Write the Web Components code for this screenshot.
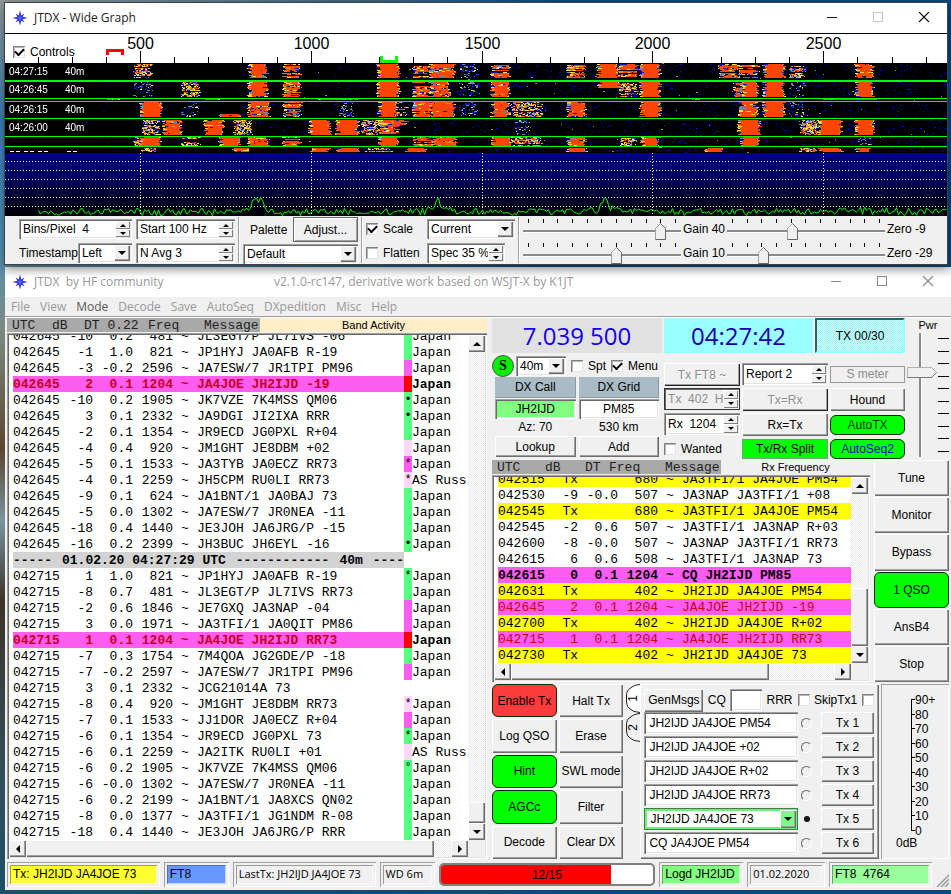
<!DOCTYPE html>
<html lang="en">
<head>
<meta charset="utf-8">
<title>JTDX</title>
<style>
html{height:100%}
body{margin:0;padding-top:2px;min-height:100%;box-sizing:border-box;overflow:hidden;color:#000;
 font:12px/14px "Liberation Sans",sans-serif;
 background:linear-gradient(90deg,transparent 8px,#0b4a80 60%),linear-gradient(180deg,#8f9a98 0,#3a7fb4 120px,#4f8fb8 240px,#7d8a80 330px,#5a4630 450px,#7a93a0 520px,#3c3428 600px,#33505e 780px,#1d4f68 100%)}
</style>
</head>
<body>
<jtdx-desktop></jtdx-desktop>
<script>
const RAISED='box-shadow:inset 1px 1px #fff,inset -1px -1px #6d6d6d,inset -2px -2px #a0a0a0;';
const SUNKEN='box-shadow:inset 1px 1px #a0a0a0,inset 2px 2px #696969,inset -1px -1px #fff,inset -2px -2px #e3e3e3;';
const BASE='*{box-sizing:border-box}button,input,select{font:inherit;color:inherit;margin:0;border:0;border-radius:0;outline:0}';
const ARROW=(d)=>{const p={up:'M4 0l4 4H0z',down:'M0 0h8L4 4z',left:'M4 0v8L0 4z',right:'M0 0l4 4-4 4z'}[d];
 const v=d==='up'||d==='down'?[8,4]:[4,8];return `<svg width="${v[0]}" height="${v[1]}" aria-hidden="true"><path d="${p}" fill="currentColor"/></svg>`};
function element(name,render,after){
 customElements.define(name,class extends HTMLElement{
  connectedCallback(){ if(this.shadowRoot)return; const r=this.attachShadow({mode:'open'});
   const t=document.createElement('template');t.innerHTML=render(this);r.append(t.content.cloneNode(true)); if(after)after(this,r);}
 });
}
const at=(e,n,d='')=>e.getAttribute(n)??d;

element('jt-button',e=>`<style>${BASE}
:host{display:block;min-width:0}
button{display:block;width:100%;height:100%;padding:0 1px;background:#f0f0f0;white-space:nowrap;overflow:hidden;${RAISED}}
:host([tone]) button{box-shadow:none;border:1px solid #0a2a0a;border-radius:6px;background:#0f0}
:host([tone=red]) button{background:#ff3b3b}
:host([tone=flat]) button{border:1px solid #7b9d7b;border-radius:0}
:host([tone=tx]) button{border:2px solid #2f7f84;border-color:#20686c #9ff #9ff #20686c;border-radius:0;background:repeating-conic-gradient(#8ff 0 25%,#e6f4f4 0 50%) 0 0/2px 2px}
:host([ink=blue]) button{color:#0000d0}
:host([ink=green]) button{color:#003a00}
:host([framed]) button{box-shadow:inset 0 0 0 1px #696969,inset 2px 2px #fff,inset -2px -2px #a0a0a0}
button:disabled{color:#8c8c8c;text-shadow:1px 1px #fff;border:0;background:#f0f0f0;box-shadow:inset 1px 1px #fff,inset -1px -1px #222,inset -2px -2px #a0a0a0}
</style><button type="button"${e.hasAttribute('disabled')?' disabled':''}><slot></slot></button>`);

element('jt-spin',e=>`<style>${BASE}
:host{display:flex;height:20px;min-width:0;padding:2px;background:#fff;${SUNKEN}}
:host([disabled]){background:#f0f0f0;color:#8c8c8c;box-shadow:inset 0 0 0 1px #333,inset 2px 2px #696969}
input{flex:1;min-width:0;width:0;padding:0 0 0 2px;background:none;height:100%}
span{display:grid;grid-template-rows:1fr 1fr;width:15px;color:#000}
button{padding:0;background:#f0f0f0;display:grid;place-items:center;min-height:0;box-shadow:inset 1px 1px #fff,inset -1px -1px #808080}
svg{width:6px;height:3px}
</style><input type="text" aria-label="${at(e,'label')}" value="${at(e,'value')}"${e.hasAttribute('disabled')?' disabled':''}>
<span><button type="button" aria-label="Increase"><svg viewBox="0 0 8 4"><path d="M4 0l4 4H0z"/></svg></button><button type="button" aria-label="Decrease"><svg viewBox="0 0 8 4"><path d="M0 0h8L4 4z"/></svg></button></span>`);

element('jt-select',e=>`<style>${BASE}
:host{display:grid;height:20px;min-width:0;padding:2px;background:#fff;${SUNKEN}}
:host([live]){background:#fff;box-shadow:inset 0 0 0 1px #3f7f46,inset 0 0 0 3px #6df07c}
select,i{grid-area:1/1;min-width:0}
select{appearance:none;background:none;width:100%;height:100%;padding:0 16px 0 2px}
i{justify-self:end;width:16px;display:grid;place-items:center;background:#f0f0f0;pointer-events:none;${RAISED}}
:host([live]) i{background:#7dfa88}
:host([live]) select{padding-left:4px}
</style><select aria-label="${at(e,'label')}"><option>${at(e,'value')}</option></select><i>${ARROW('down')}</i>`);

element('jt-check',e=>`<style>${BASE}
:host{display:block;white-space:nowrap}
label{display:flex;align-items:center;gap:5px}
:host([after]) label{flex-direction:row-reverse}
input{appearance:none;width:12px;height:12px;background:#fff;flex:none;display:grid;place-items:center;box-shadow:inset 1px 1px #808080,inset -1px -1px #e3e3e3,inset 2px 2px #b5b5b5}
input:checked::after{content:"";width:7px;height:4px;margin-top:-2px;border:solid #000;border-width:0 0 2px 2px;transform:rotate(-45deg)}
</style><label><input type="checkbox"${e.hasAttribute('checked')?' checked':''}><slot></slot></label>`);

element('jt-field',e=>`<style>${BASE}
:host{display:block;height:22px;min-width:0}
input{width:100%;height:100%;padding:0 5px;background:var(--field,#fff);${SUNKEN}}
:host([center]) input{text-align:center;padding:0 2px}
</style><input type="text" aria-label="${at(e,'label')}" value="${at(e,'value')}">`);

element('jt-slider',e=>{const th=encodeURIComponent('<svg xmlns="http://www.w3.org/2000/svg" width="11" height="17"><path d="M.5 16.500V5.500L5.500.5l5 5v11z" fill="#f0f0f0" stroke="#a0a0a0"/><path d="M5.500.5l5 5v11H.5" fill="none" stroke="#666"/></svg>');
 return `<style>${BASE}
:host{display:grid;grid-template-rows:4px 17px;min-width:0}
div{display:flex;justify-content:space-between;padding:0 5px}
b{width:1px;background:#000}
input{appearance:none;width:100%;height:17px;background:linear-gradient(#8a8a8a 2px,#fff 2px) center/100% 3px no-repeat}
input::-webkit-slider-thumb{appearance:none;width:11px;height:17px;background:url("data:image/svg+xml,${th}")}
</style><div>${'<b></b>'.repeat(11)}</div><input type="range" min="0" max="100" value="${at(e,'value')}" aria-label="${at(e,'label')}">`});

element('power-slider',()=>{const th=encodeURIComponent('<svg xmlns="http://www.w3.org/2000/svg" width="30" height="11"><path d="M.5.5h24l5 5-5 5H.5z" fill="#f0f0f0" stroke="#b0b0b0"/><path d="M29.500 5.500l-5 5H.5" fill="none" stroke="#777"/></svg>');
 return `<style>${BASE}
:host{display:grid;grid-template:15px 1fr/30px 1fr;min-width:0}
label{grid-column:1/3;justify-self:center;font-size:11px}
input{appearance:none;writing-mode:vertical-lr;direction:rtl;width:30px;height:124px;background:linear-gradient(90deg,#8a8a8a 2px,#fff 2px) 12px 0/3px 100% no-repeat}
input::-webkit-slider-thumb{appearance:none;width:30px;height:11px;background:url("data:image/svg+xml,${th}")}
div{display:flex;flex-direction:column;justify-content:space-between;height:124px;padding:5px 0}
b{height:1px;background:#000;margin-left:1px}
</style><label for="p">Pwr</label><input id="p" type="range" min="0" max="100" value="70"><div>${'<b></b>'.repeat(10)}</div>`});

const STAR=`<svg class="star" width="16" height="16" viewBox="-8 -8 16 16" aria-hidden="true"><path d="M0-7.500L1.300-2.500 4.500-4.500 2.500-1.300 7.500 0 2.500 1.300 4.500 4.500 1.300 2.500 0 7.500-1.300 2.500-4.500 4.500-2.500 1.300-7.500 0-2.500-1.300-4.500-4.500-1.300-2.500z" fill="#2323f5"/><path d="M0-5L.8-.8 5 0 .8.8 0 5-.8.8-5 0-.8-.8z" fill="#5b6bff"/></svg>`;
element('app-window',e=>`<style>${BASE}
:host{display:block;background:#f0f0f0}
header{display:grid;grid-template-columns:262px auto 1fr;align-items:center;height:30px;background:#fff;padding-left:7px;font:12px/16px "Open Sans","Noto Sans",sans-serif;color:#222}
:host([inactive]) header{color:#999;background:linear-gradient(#ececec,#fff 10px)}
.name{display:flex;align-items:center;gap:6px;white-space:pre}
nav{display:flex;justify-content:flex-end}
nav button{width:46px;height:28px;padding:0;background:none;display:grid;place-items:center;color:#111}
:host([inactive]) button{color:#8a8a8a}
nav button:disabled{color:#c4c4c4}
</style><header><span class="name">${STAR}${at(e,'name')}</span><span>${at(e,'note')}</span><nav>
<button aria-label="Minimize"><svg width="12" height="12"><path d="M1 5.500h10" stroke="currentColor"/></svg></button>
<button aria-label="Maximize"${e.hasAttribute('fixed')?' disabled':''}><svg width="12" height="12"><rect x="1.500" y=".5" width="9" height="9" fill="none" stroke="currentColor"/></svg></button>
<button aria-label="Close"><svg width="12" height="12"><path d="M1 0l10 10M11 0L1 10" stroke="currentColor" stroke-width="1.200"/></svg></button>
</nav></header><slot></slot>`);

/* frequency (Hz) -> horizontal position in the graph */
const fx=f=>135+(f-500)*.3416;
element('freq-ruler',()=>{let s='';for(let f=200;f<=2800;f+=100){const x=Math.round(fx(f))+.5,M=f%500===0;s+=`<path d="M${x} ${M?17:23}V29" stroke="#000"/>`;if(M)s+=`<text x="${x}" y="15" text-anchor="middle">${f}</text>`}
 return `<style>${BASE}
:host{display:grid;height:30px;background:#fff;border-top:1px solid #000}
svg,jt-check{grid-area:1/1}
svg{width:100%;height:29px}text{font:16px "Liberation Sans",sans-serif}
jt-check{place-self:end start;padding:0 0 4px 8px;font-size:12px}
</style><svg>${s}<path d="M102.500 21V16.500h15V21" fill="none" stroke="#f00" stroke-width="3"/><path d="M376.500 22v5.500h15V22" fill="none" stroke="#0f0" stroke-width="3"/></svg><jt-check checked>Controls</jt-check>`});

/* signal bursts per reception period: [x0, x1, strength], strength 3 solid, 2 strong, 1 mixed, 0 weak, -1 faint */
const BURSTS=[
 [1,15,[[134,150,0],[248,266,2],[283,299,1],[377,398,3],[413,430,1],[430,453,2],[460,477,-1],[491,508,1],[567,584,1],[597,617,3],[618,636,1],[640,659,3],[719,737,1],[739,757,1],[763,783,3],[790,803,0],[855,872,2]]],
 [19,34,[[134,150,-1],[182,198,0],[248,266,2],[283,299,1],[377,398,3],[413,430,1],[430,448,2],[460,477,-1],[491,508,2],[620,636,0],[640,659,3],[733,742,1],[742,756,3],[763,783,3],[790,803,-1],[855,872,3]]],
 [19,25,[[597,618,3]]],
 [39,54,[[140,160,3],[182,198,-1],[248,268,2],[283,300,1],[340,352,-1],[378,396,3],[396,406,0],[413,430,2],[430,453,2],[460,475,-1],[491,508,2],[512,540,0],[567,584,2],[640,659,3],[739,757,2],[763,783,3],[788,804,-1]]],
 [51,54,[[219,240,2]]],
 [57,72,[[142,158,0],[163,180,2],[204,222,2],[234,250,0],[309,329,3],[336,357,3],[362,378,0],[380,398,1],[515,528,-1],[738,759,3],[800,817,0],[818,840,3],[855,872,3]]],
 [57,62,[[380,406,1],[545,562,1]]],
 [74,83,[[134,142,0],[140,160,3],[182,198,0],[219,239,3],[248,267,2],[283,299,1],[378,397,3],[413,432,1],[432,455,2],[491,510,3],[512,540,0],[567,584,2],[620,634,0],[641,658,2],[740,758,3],[858,870,-1]]],
 [85,89,[[142,156,0],[233,248,2],[311,328,3],[337,357,3],[365,390,0],[405,425,2],[567,585,3],[704,722,3],[800,815,0],[818,840,3],[855,868,3]]],
 [36,37,[[106,118,1],[204,218,1],[318,358,1],[690,700,0],[822,875,2]]]
];
function paint(cv,W){
 const H=153,c=cv.getContext('2d');cv.width=W;cv.height=H;let seed=9173;
 const rnd=()=>{seed=Math.imul(seed^seed>>>15,0x2c1b3c6d)+0x6d2b79f5|0;let t=seed^seed>>>13;t=Math.imul(t,0x297a2d39);return((t^t>>>16)>>>0)/4294967296};
 const px=(x,y,w,h,col)=>{c.fillStyle=col;c.fillRect(x,y,w,h)};
 px(0,0,W,90,'#000');
 for(let i=0;i<5200;i++){const x=rnd()*W|0,y=rnd()*90|0;if(rnd()<(x<230?.03:x<400?.25:.6))px(x,y,1+(rnd()*1.500|0),1,rnd()<.05?'#8a9a60':rnd()<.4?'#0000c0':'#000078')}
 const weak=['#0a18b8','#6f88b0','#ffe050','#ffcf40','#ff8a20'],hot='#ff4500';
 for(const[y0,y1,list]of BURSTS)for(const[a,b,s]of list)for(let y=y0;y<y1;y++){
  const l=a-5+(rnd()*4-2|0),r=b-4+(rnd()*5-2|0);
  if(s<2&&rnd()<.14)continue;
  const hotRow=s===3?1:s===2?(rnd()<.75?.95:.6):s===1?(rnd()<.6?.8:.4):s===0?.16:0;
  for(let x=l;x<r;){const edge=x<l+1||x>r-3;const w=Math.min(1+(rnd()*(s>0?4:2)|0),r-x);
   if(s===3?!edge:!edge&&rnd()<hotRow)px(x,y,w,1,hot);
   else if(rnd()<(s<0?.35:.72))px(x,y,w,1,s<0?weak[rnd()*2.200|0]:weak[rnd()*5|0]);
   x+=w}}
 for(const[y,h]of[[17,2],[35,1],[38,1],[55,1],[73,1],[83,1]])px(0,y,W,h,'#0f0');
 for(const x of[5,11,19,25,33,39,62,68])px(x,88,4,1,'#fff');
 const g=c.createLinearGradient(0,90,0,H);g.addColorStop(0,'#00008a');g.addColorStop(.5,'#00004c');g.addColorStop(1,'#000');c.fillStyle=g;c.fillRect(0,90,W,63);
 c.fillStyle='#fff';for(const y of[98,107,116,125,134,143])for(let x=0;x<W;x+=3)c.fillRect(x,y,1,1);
 for(const f of[500,1000,1500,2000,2500])for(let y=90;y<H;y+=3)c.fillRect(Math.round(fx(f)),y,1,1);
 c.strokeStyle='#00ff00';c.lineWidth=1;c.beginPath();
 const bump=(x,m,w,h)=>h*Math.exp(-((x-m)**2)/(2*w*w));
 for(let x=33;x<W;x+=2){let y=151.5-rnd()*6+(rnd()<.15?2:0)+(x<60?1:0);
  y-=bump(x,249,2,11)+bump(x,256,2,12)+bump(x,248,11,4)+bump(x,432,1.500,11)+bump(x,432,9,4)+bump(x,599,2,10)+bump(x,602,9,5)+bump(x,691,4,4)+bump(x,850,30,2);
  c.lineTo(x+.5,Math.min(152.5,y))}
 c.stroke();
}
element('water-fall',()=>`<style>${BASE}
:host{display:grid;height:153px;position:relative;overflow:hidden;background:#000}
canvas{width:100%;height:153px;image-rendering:pixelated}
span{position:absolute;left:4px;color:#fff;font-size:10px;line-height:12px;display:flex;gap:17px}
em{font-style:normal}
</style><canvas role="img" aria-label="Waterfall and spectrum"></canvas>${[['04:27:15',3],['04:26:45',21],['04:26:15',41],['04:26:00',59]].map(([t,y])=>`<span style="top:${y}px"><time>${t}</time><em>40m</em></span>`).join('')}`,
(e,r)=>{const cv=r.querySelector('canvas');const go=()=>{const w=Math.round(e.getBoundingClientRect().width);if(w&&w!==cv.width)paint(cv,w)};requestAnimationFrame(go);go();addEventListener('resize',go)});

element('graph-controls',()=>`<style>${BASE}
:host{display:flex;gap:3px;height:48px;padding:3px 0 0 14px}
section{display:grid;grid-template-rows:21px 21px;row-gap:3px}
hr{width:2px;height:46px;margin:-2px 0 0;border:0;background:#a0a0a0;border-right:1px solid #fff}
.a{grid-template-columns:113px 99px;column-gap:4px}
.a>div{display:flex;align-items:start}.a>div>jt-select{flex:1}
.a>div>span{line-height:20px}
.b{width:115px;margin-top:-2px;grid-template-rows:25px 20px;row-gap:2px}
.b>div{display:flex;align-items:center;justify-content:space-between;padding-left:7px}
.b jt-button{width:65px;height:25px}
.c{grid-template-columns:61px 88px}.c jt-spin{width:78px}
.c jt-check{line-height:20px}
.d{flex:1;grid-template-columns:1fr 42px 1fr 60px;column-gap:2px}
.d span{line-height:20px;white-space:nowrap}
</style>
<section class="a"><jt-spin label="Bins per pixel" value="Bins/Pixel  4"></jt-spin><jt-spin label="Start" value="Start 100 Hz"></jt-spin>
<div><span>Timestamp</span><jt-select label="Timestamp" value="Left"></jt-select></div><jt-spin label="N Avg" value="N Avg 3"></jt-spin></section><hr>
<section class="b"><div><span>Palette</span><jt-button framed>Adjust...</jt-button></div><jt-select label="Palette" value="Default"></jt-select></section><hr>
<section class="c"><jt-check checked>Scale</jt-check><jt-select label="Spectrum" value="Current"></jt-select><jt-check>Flatten</jt-check><jt-spin label="Spec" value="Spec 35 %"></jt-spin></section><hr>
<section class="d"><jt-slider label="Gain" value="90"></jt-slider><span>Gain 40</span><jt-slider label="Zero" value="41"></jt-slider><span>Zero -9</span>
<jt-slider label="Gain 2D" value="60"></jt-slider><span>Gain 10</span><jt-slider label="Zero 2D" value="21"></jt-slider><span>Zero -29</span></section>`);

element('app-menu',()=>`<style>${BASE}
:host{display:flex;gap:10px;height:21px;padding:0 6px;border-bottom:1px solid #fff;box-shadow:inset 0 -1px #a0a0a0;font:12px/19px "Open Sans","Noto Sans",sans-serif;color:#999}
button{background:none;padding:0;line-height:19px;height:19px}.on{color:#5a5a5a}
</style>${'File,View,Mode,Decode,Save,AutoSeq,DXpedition,Misc,Help'.split(',').map(m=>`<button${m==='Mode'?' class="on"':''}>${m}</button>`).join('')}`);

/* row: time|dB|DT|freq|message|colour mark|mark sign|country|style */
const BAND=`042645|-10|0.2|481|JL3EGT/P JL7IVS -06|g||Japan
042645|-1|1.0|821|JP1HYJ JA0AFB R-19|g||Japan
042645|-3|-0.2|2596|JA7ESW/7 JR1TPI PM96|m||Japan
042645|2|0.1|1204|JA4JOE JH2IJD -19|r||Japan|me
042645|-10|0.2|1905|JK7VZE 7K4MSS QM06|g|•|Japan
042645|3|0.1|2332|JA9DGI JI2IXA RRR|g|•|Japan
042645|-2|0.1|1354|JR9ECD JG0PXL R+04|g||Japan
042645|-4|0.4|920|JM1GHT JE8DBM +02|p||Japan
042645|-5|0.1|1533|JA3TYB JA0ECZ RR73|m|*|Japan
042645|-4|0.1|2259|JH5CPM RU0LI RR73|p|*|AS Russ
042645|-9|0.1|624|JA1BNT/1 JA0BAJ 73|g||Japan
042645|-5|0.0|1302|JA7ESW/7 JR0NEA -11|g||Japan
042645|-18|0.4|1440|JE3JOH JA6JRG/P -15|g||Japan
042645|-16|0.2|2399|JH3BUC JH6EYL -16|g|•|Japan
-
042715|1|1.0|821|JP1HYJ JA0AFB R-19|g|*|Japan
042715|-8|0.7|481|JL3EGT/P JL7IVS RR73|g||Japan
042715|-2|0.6|1846|JE7GXQ JA3NAP -04|m||Japan
042715|3|0.0|1971|JA3TFI/1 JA0QIT PM86|m||Japan
042715|1|0.1|1204|JA4JOE JH2IJD RR73|r||Japan|me
042715|-7|0.3|1754|7M4QOA JG2GDE/P -18|g||Japan
042715|-7|-0.2|2597|JA7ESW/7 JR1TPI PM96|m||Japan
042715|3|0.1|2332|JCG21014A 73|||
042715|-8|0.4|920|JM1GHT JE8DBM RR73|p|*|Japan
042715|-7|0.1|1533|JJ1DOR JA0ECZ R+04|m||Japan
042715|-6|0.1|1354|JR9ECD JG0PXL 73|g|*|Japan
042715|-6|0.1|2259|JA2ITK RU0LI +01|p||AS Russ
042715|-6|0.2|1905|JK7VZE 7K4MSS QM06|g|°|Japan
042715|-6|-0.0|1302|JA7ESW/7 JR0NEA -11|g||Japan
042715|-6|0.2|2199|JA1BNT/1 JA8XCS QN02|g||Japan
042715|-8|0.0|1377|JA3TFI/1 JG1NDM R-08|g||Japan
042715|-18|0.4|1440|JE3JOH JA6JRG/P RRR|g||Japan`;
const RX=`042515|Tx||680|JA3TFI/1 JA4JOE PM54||||tx
042530|-9|-0.0|507|JA3NAP JA3TFI/1 +08
042545|Tx||680|JA3TFI/1 JA4JOE PM54||||tx
042545|-2|0.6|507|JA3TFI/1 JA3NAP R+03
042600|-8|-0.0|507|JA3NAP JA3TFI/1 RR73
042615|6|0.6|508|JA3TFI/1 JA3NAP 73
042615|0|0.1|1204|CQ JH2IJD PM85||||cq
042631|Tx||402|JH2IJD JA4JOE PM54||||tx
042645|2|0.1|1204|JA4JOE JH2IJD -19||||me
042700|Tx||402|JH2IJD JA4JOE R+02||||tx
042715|1|0.1|1204|JA4JOE JH2IJD RR73||||me
042730|Tx||402|JH2IJD JA4JOE 73||||tx`;
element('decode-list',e=>{const band=e.hasAttribute('band');
 const rows=(band?BAND:RX).split('\n').map(l=>{
  if(l==='-')return '<tr class="sep"><td colspan="6"><div><span>-----</span><span>01.02.20 04:27:29 UTC</span><span>------------</span><span>40m</span><span>----</span></div></td><td></td><td></td></tr>';
  const[t,db,dt,f,m,k='',s='',cn='',st='']=l.split('|');
  return `<tr class="${st}"><td>${t}</td><td class="n">${db}</td><td class="n">${dt}</td><td class="n">${f}</td><td class="c">~</td><td>${m}</td>${band?`<td class="k ${k}">${s}</td><td class="cn">${cn}</td>`:''}</tr>`}).join('');
 return `<style>${BASE}
:host{display:block;min-width:0}
.view{display:grid;grid-template:var(--view,186px) 17px/minmax(0,1fr) 17px;padding:2px;background:#f0f0f0;${SUNKEN}}
.rows{background:#fff;overflow:hidden;display:flex;flex-direction:column;justify-content:flex-end;padding-left:4px}
table{flex:none;width:100%;table-layout:fixed;border-collapse:collapse;font:13px/15px "Liberation Mono",monospace}
td{padding:1px 0 0;height:16px;white-space:pre;overflow:hidden}
td:last-child{overflow:visible}
.n{text-align:right}.c{text-align:center}.k{text-align:center;font-size:12px}
.g{background:#55ff7f}.m{background:#ff5cf0}.p{background:#ffd7fa}
.me td{background:#ff5cf0;color:#c8001e;font-weight:${band?'bold':'normal'}}
.me td.r{background:#f00}.me td.cn{background:#fff;color:#000}
.tx td{background:#ff0}.cq td{background:#ff5cf0;font-weight:bold}
.sep td:first-child{background:#d3d3d3;font-weight:bold}.sep div{display:flex;justify-content:space-between}
.v,.h{display:flex;background:repeating-conic-gradient(#e8e8e8 0 25%,#fff 0 50%) 0 0/2px 2px}
.v{flex-direction:column}.h{grid-row:2}
button{width:17px;height:17px;flex:none;padding:0;display:grid;place-items:center;background:#f0f0f0;${RAISED}}
.v i,.h i{background:#f0f0f0;${RAISED}}
.v i{height:${band?'21px':'58px'};margin-top:auto}.h i{width:${band?'408px':'258px'}}
.h button:last-child{margin-left:auto}
</style><div class="view"><div class="rows"><table aria-label="${band?'Band Activity':'Rx Frequency'}"><colgroup><col style="width:48px"><col style="width:32px"><col style="width:40px"><col style="width:40px"><col style="width:24px"><col>${band?'<col style="width:8px"><col style="width:56px">':''}</colgroup><tbody>${rows}</tbody></table></div>
<div class="v"><button aria-label="Up">${ARROW('up')}</button><i></i><button aria-label="Down">${ARROW('down')}</button></div>
<div class="h"><button aria-label="Left">${ARROW('left')}</button><i></i><button aria-label="Right">${ARROW('right')}</button></div></div>`});

element('list-head',e=>{const cols=at(e,'cols');return `<style>${BASE}
:host{display:flex;height:14px;background:var(--head,none)}
div{display:grid;grid-template-columns:${cols};padding:1px 0 0 5px;background:#a9a9a9;font:13px/13px "Liberation Mono",monospace;white-space:pre;color:#222}
p{flex:1;margin:0;text-align:center;font-size:11px;white-space:nowrap}
</style><div>${at(e,'labels').split(',').map(s=>`<span>${s}</span>`).join('')}</div><p><slot></slot></p>`});

element('radio-panel',()=>`<style>${BASE}
:host{display:grid;grid-template-columns:170fr 76fr 86fr 75fr;grid-template-rows:35px auto;gap:2px 2px;min-width:0}
.top{grid-column:1/5;display:grid;grid-template-columns:170fr 149fr 90fr;gap:2px}
.big{font:24px/36px "Open Sans","Noto Sans",sans-serif;color:#1200ee;text-align:center;background:#e1e1e1;white-space:nowrap;height:35px}
.big.t{background:#9ff;color:#1a00a8}
.row{display:flex;align-items:center;gap:4px}
.row .s{width:22px;height:22px;border-radius:50%;background:#00f000;border:1px solid #555;display:grid;place-items:center;font:bold 14px "Liberation Serif",serif;margin-right:-2px;padding:0}
.row jt-select{width:50px}.row jt-check:last-child{margin-left:auto;padding-right:4px}
.row jt-check{padding-left:1px}
.dx{display:grid;grid-template-columns:1fr 1fr;gap:1px 3px;padding:0 3px}
.dx label{height:21px;line-height:20px;text-align:center;background:#a9bcc6;box-shadow:inset -1px -1px #8b9ba4}
.dx jt-field{height:20px}.dx span{text-align:center;line-height:15px}
.dx jt-button{height:21px}
.col{display:grid;grid-template-rows:23px 23px 23px 21px;row-gap:2px;padding-top:8px;min-width:0}
.col>*{min-width:0}.col jt-spin{height:22px}
.col jt-check{align-self:center}
.sm{height:17px;align-self:center;border:1px solid #999;color:#8c8c8c;text-align:center;line-height:15px}
.col jt-button[tone]{height:20px;align-self:center}
</style>
<div class="top"><div class="big">7.039 500</div><div class="big t">04:27:42</div><jt-button tone="tx">TX 00/30</jt-button></div>
<div><div class="row"><button class="s">S</button><jt-select label="Band" value="40m"></jt-select><jt-check>Spt</jt-check><jt-check checked>Menu</jt-check></div>
<div class="dx"><label>DX Call</label><label>DX Grid</label><jt-field center label="DX Call" value="JH2IJD" style="--field:#80ff80"></jt-field><jt-field center label="DX Grid" value="PM85"></jt-field><span>Az: 70</span><span>530 km</span><jt-button>Lookup</jt-button><jt-button>Add</jt-button></div></div>
<div class="col"><jt-button disabled>Tx FT8 ~</jt-button><jt-spin disabled label="Tx" value="Tx  402  Hz"></jt-spin><jt-spin label="Rx" value="Rx  1204"></jt-spin><jt-check>Wanted</jt-check></div>
<div class="col"><jt-spin label="Report" value="Report 2"></jt-spin><jt-button disabled>Tx=Rx</jt-button><jt-button>Rx=Tx</jt-button><jt-button tone="flat">Tx/Rx Split</jt-button></div>
<div class="col"><div class="sm">S meter</div><jt-button>Hound</jt-button><jt-button tone="green" ink="green">AutoTX</jt-button><jt-button tone="green" ink="blue">AutoSeq2</jt-button></div>`);

element('tx-panel',()=>{const M=['JH2IJD JA4JOE PM54','JH2IJD JA4JOE +02','JH2IJD JA4JOE R+02','JH2IJD JA4JOE RR73','JH2IJD JA4JOE 73','CQ JA4JOE PM54'];
 return `<style>${BASE}
:host{display:block;padding:4px 5px 1px 4px;min-width:0;box-shadow:inset 1px 1px #fff,inset -1px -1px #696969,inset -2px -2px #a0a0a0}
.top{display:flex;align-items:center;justify-content:space-between;height:24px}
.top jt-button{width:59px;height:23px}.top jt-field{width:32px}
form{display:grid;grid-template-columns:minmax(0,154fr) 17px 54fr;grid-auto-rows:22px;gap:2px 3px;align-items:center}
form>*{min-width:0}form jt-select{height:22px}form jt-button{height:22px}
input[type=radio]{appearance:none;width:11px;height:11px;border-radius:50%;justify-self:start;border:1px solid;border-color:#666 #fff #fff #666;background:#f0f0f0}
input:checked{border:3px solid #f0f0f0!important;background:#111!important;width:12px;height:12px}
</style><div class="top"><jt-button>GenMsgs</jt-button><span>CQ</span><jt-field label="CQ direction"></jt-field><jt-check after>RRR</jt-check><jt-check after>SkipTx1</jt-check></div>
<form>${M.map((m,i)=>(i===4?`<jt-select live label="Tx 5 message" value="${m}"></jt-select>`:`<jt-field label="Tx ${i+1} message" value="${m}"></jt-field>`)+`<input type="radio" name="n" aria-label="Next Tx ${i+1}"${i===4?' checked':''}><jt-button>Tx ${i+1}</jt-button>`).join('')}</form>`});

element('side-tabs',()=>`<style>${BASE}
:host{display:block}
button{display:grid;width:100%;height:29px;padding:0;background:none}
svg,span{grid-area:1/1}svg{width:15px;height:29px;display:block}
span{writing-mode:vertical-rl;rotate:180deg;place-self:center;line-height:12px}
</style>${[1,2].map(n=>`<button role="tab"><svg viewBox="0 0 15 29"><path d="M15 .5C10 1 8 2 5 4.500Q1.500 6 1.500 12V18Q1.500 23 5 25q3 3 10 3.500" fill="${n===1?'#fff':'#f0f0f0'}" stroke="#222"/></svg><span>${n}</span></button>`).join('')}`);

element('level-meter',()=>{let s='';for(let i=0;i<10;i++){const y=15+i*14.5;s+=`<path d="M30 ${Math.round(y)+.5}h4" stroke="#000"/><text x="34" y="${Math.round(y)+5}">${i===0?'90+':90-i*10}</text>`}
 return `<style>${BASE}
:host{display:block;min-width:0;box-shadow:inset 1px 1px #a0a0a0,inset -1px -1px #fff}
svg{display:block;width:100%;height:175px;overflow:hidden}text{font-size:12px}
</style><svg role="img" aria-label="Input level"><path d="M30.500 15v132" stroke="#000"/>${s}<text x="15" y="163">0dB</text></svg>`});

element('status-cell',e=>`<style>${BASE}
:host{display:block;padding:3px;min-width:0;height:25px;background:#f0f0f0;box-shadow:inset 1px 1px #a0a0a0,inset -1px -1px #fff}
div{height:19px;padding:0 3px;line-height:18px;white-space:nowrap;overflow:hidden;background:var(--fill,#f0f0f0);box-shadow:inset 1px 1px rgba(70,70,70,.5),inset -1px -1px rgba(255,255,255,.6)}
:host([system]) div{font-family:"Open Sans","Noto Sans",sans-serif;font-size:11px}
</style><div><slot></slot></div>`);
element('period-bar',e=>`<style>${BASE}
:host{display:grid;height:23px;align-self:center;border:2px solid #808080;border-radius:5px;overflow:hidden;background:#fff;min-width:0}
i,span{grid-area:1/1}i{background:#f00;width:80%}
span{place-self:center}
</style><i></i><span><slot></slot></span>`);

element('jtdx-desktop',()=>`<style>${BASE}
:host{display:block}
.graph{position:relative;margin:0 3px 2px 4px;border:1px solid #3c4448;box-shadow:1px 3px 10px rgba(0,0,0,.45)}
.main{margin-left:5px}
main{display:grid;grid-template-columns:minmax(0,480fr) minmax(0,457fr);gap:5px;padding:0 2px}
.left{display:grid;grid-template-rows:14px auto;row-gap:1px;align-content:start}
.right{display:grid;row-gap:2px;align-content:start;min-width:0}
.radio{display:grid;grid-template-columns:minmax(0,413fr) 42fr;gap:2px;height:140px}
.mid{display:grid;grid-template-columns:minmax(0,378fr) 75fr;gap:4px}
.side{display:grid;grid-auto-rows:1fr;row-gap:1px}
.rx{display:grid;grid-template-rows:14px auto;row-gap:1px;align-content:start}
.low{display:grid;grid-template-columns:132fr 13px minmax(0,240fr) 68fr;column-gap:2px;min-height:175px}
.keys{display:grid;grid-template-columns:1fr 1fr;grid-auto-rows:1fr;gap:2px}
side-tabs{width:15px}
footer{display:grid;grid-template-columns:153fr 65fr 143fr 55fr 217fr 84fr 78fr 103fr 13px;gap:4px;padding:3px 2px}
footer svg{align-self:end}
</style>
<app-window class="graph" fixed name="JTDX - Wide Graph"><freq-ruler></freq-ruler><water-fall></water-fall><graph-controls></graph-controls></app-window>
<app-window class="main" inactive name="JTDX  by HF community" note="v2.1.0-rc147, derivative work based on WSJT-X by K1JT"><app-menu></app-menu>
<main><div class="left"><list-head style="--head:#ffeec8" cols="40px 32px 64px 56px 56px" labels="UTC,dB,DT 0.22,Freq,Message">Band Activity</list-head><decode-list band style="--view:505px"></decode-list></div>
<div class="right"><div class="radio"><radio-panel></radio-panel><power-slider></power-slider></div>
<div class="mid"><div class="rx"><list-head cols="48px 40px 24px 56px 56px" labels="UTC,dB,DT,Freq,Message">Rx Frequency</list-head><decode-list></decode-list></div>
<div class="side"><jt-button>Tune</jt-button><jt-button>Monitor</jt-button><jt-button>Bypass</jt-button><jt-button tone="green">1 QSO</jt-button><jt-button>AnsB4</jt-button><jt-button>Stop</jt-button></div></div>
<div class="low"><div class="keys"><jt-button tone="red">Enable Tx</jt-button><jt-button>Halt Tx</jt-button><jt-button>Log QSO</jt-button><jt-button>Erase</jt-button><jt-button tone="green">Hint</jt-button><jt-button>SWL mode</jt-button><jt-button tone="green">AGCc</jt-button><jt-button>Filter</jt-button><jt-button>Decode</jt-button><jt-button>Clear DX</jt-button></div>
<side-tabs></side-tabs><tx-panel></tx-panel><level-meter></level-meter></div></div></main>
<footer><status-cell style="--fill:#ffff32">Tx: JH2IJD JA4JOE 73</status-cell><status-cell style="--fill:#6699ff">FT8</status-cell><status-cell system>LastTx: JH2IJD JA4JOE 73</status-cell><status-cell system>WD 6m</status-cell><period-bar>12/15</period-bar><status-cell style="--fill:#80ff80">Logd JH2IJD</status-cell><status-cell system>01.02.2020</status-cell><status-cell style="--fill:#99ff99">FT8&nbsp; 4764</status-cell><svg width="13" height="13" aria-hidden="true"><path d="M1 13L13 1M5 13l8-8M9 13l4-4" stroke="#999" stroke-width="1.500"/></svg></footer>
</app-window>`);
</script>
</body>
</html>
